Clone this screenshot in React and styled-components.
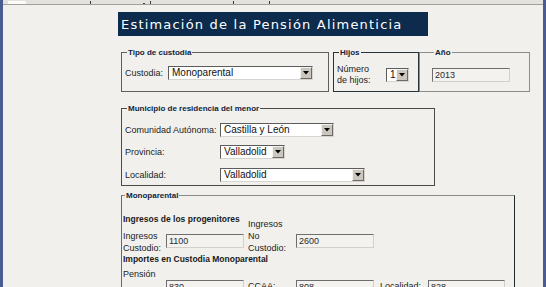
import React from 'react';
import styled, { createGlobalStyle } from 'styled-components';

const GlobalStyle = createGlobalStyle`
  html, body {
    margin: 0;
    padding: 0;
    background: #f1f0ec;
  }
  body {
    font-family: "Liberation Sans", Arial, sans-serif;
    color: #1a1a1a;
  }
`;

const Window = styled.div`
  width: 546px;
  height: 287px;
  box-sizing: border-box;
  overflow: hidden;
  border-left: 3px solid #4a5b93;
  border-right: 3px solid #4a5b93;
  background: #f1f0ec;
  display: flex;
  flex-direction: column;
`;

const TopStrip = styled.div`
  height: 4px;
  flex-shrink: 0;
  background: #e4e2dc;
  border-bottom: 1px solid #a3a19b;
  display: flex;
  align-items: flex-end;
`;

const StripMark = styled.span`
  display: block;
  width: ${p => p.$w}px;
  height: ${p => p.$h || 3}px;
  margin-left: ${p => p.$ml}px;
  background: ${p => p.$bg || '#3a3a3a'};
`;

const Content = styled.div`
  padding-left: 115px;
  display: flex;
  flex-direction: column;
`;

const TitleBar = styled.div`
  margin-top: 7px;
  width: 307px;
  height: 24px;
  padding-left: 3px;
  background: #0c2b4d;
  color: #ffffff;
  font-family: "DejaVu Sans", sans-serif;
  font-size: 13px;
  letter-spacing: 1.2px;
  line-height: 25px;
  white-space: nowrap;
`;

const Row = styled.div`
  display: flex;
  align-items: flex-start;
  margin-top: ${p => p.$mt || 0}px;
  margin-left: ${p => (p.$flush ? 0 : 3)}px;
  gap: ${p => p.$gap || 0}px;
`;

const Fieldset = styled.fieldset`
  margin: 0;
  min-width: 0;
  box-sizing: border-box;
  width: ${p => p.$w}px;
  height: ${p => p.$h}px;
  padding: ${p => p.$pad || '0 0 0 3px'};
  border: 1px solid ${p => p.$color || '#555'};
  ${p => p.$colors && `border-color: ${p.$colors};`}
`;

const Legend = styled.legend`
  margin-left: 2px;
  padding: 0 1px;
  font-family: "Liberation Sans", Arial, sans-serif;
  font-weight: bold;
  font-size: 8px;
  line-height: 9px;
  color: #0f2440;
`;

const FieldRow = styled.div`
  display: flex;
  align-items: center;
  height: ${p => p.$h || 14}px;
  margin-top: ${p => p.$mt || 0}px;
`;

const Label = styled.span`
  display: block;
  width: ${p => p.$w}px;
  flex-shrink: 0;
  margin-top: ${p => p.$mt || 0}px;
  font-size: 9px;
  line-height: ${p => p.$lh || 11}px;
  color: #1c1c1c;
  white-space: nowrap;
`;

const SelectBox = styled.div`
  box-sizing: border-box;
  width: ${p => p.$w}px;
  height: 14px;
  display: flex;
  align-items: center;
  background: #ffffff;
  border: 1px solid;
  border-color: #5c5c5c #d6d4cf #d6d4cf #5c5c5c;
`;

const SelectText = styled.span`
  flex: 1;
  padding-left: 3px;
  font-size: 10px;
  line-height: 12px;
  color: #111;
  white-space: nowrap;
  overflow: hidden;
`;

const ArrowButton = styled.span`
  box-sizing: border-box;
  width: 12px;
  height: 12px;
  display: flex;
  align-items: center;
  justify-content: center;
  background: #cbc7bf;
  border: 1px solid;
  border-color: #f4f3ef #6d6a64 #6d6a64 #f4f3ef;
`;

const TextBox = styled.div`
  box-sizing: border-box;
  width: ${p => p.$w}px;
  height: 14px;
  margin-top: ${p => p.$mt || 0}px;
  padding-left: 2px;
  background: #f3f2ef;
  border: 1px solid;
  border-color: #6e6e6e #d2d0cb #d2d0cb #6e6e6e;
  font-size: 9px;
  line-height: 12px;
  color: #2a2a2a;
`;

const Heading = styled.div`
  font-weight: bold;
  font-size: 8.5px;
  line-height: 12px;
  color: #1a1a1a;
  margin-top: ${p => p.$mt || 0}px;
`;

const Stack = styled.div`
  display: flex;
  flex-direction: column;
  margin-top: ${p => p.$mt || 0}px;
`;

const Grid = styled.div`
  display: grid;
  grid-template-columns: 43px 78px 4px 48px 78px 6px 48px 78px;
  align-items: start;
  margin-top: ${p => p.$mt || 0}px;
`;

const Spacer = styled.span`
  display: block;
`;

function Arrow() {
  return (
    <svg width="6" height="4" viewBox="0 0 6 4">
      <path d="M0 0h6L3 3.5z" fill="#000" />
    </svg>
  );
}

function Select({ width, value }) {
  return (
    <SelectBox $w={width}>
      <SelectText>{value}</SelectText>
      <ArrowButton>
        <Arrow />
      </ArrowButton>
    </SelectBox>
  );
}

export default function App() {
  return (
    <>
      <GlobalStyle />
      <Window>
        <TopStrip>
          <StripMark $w={18} $h={3} $ml={5} $bg="#fbfbfa" />
          <StripMark $w={1} $ml={64} />
          <StripMark $w={2} $h={1} $ml={52} />
          <StripMark $w={1} $ml={5} />
          <StripMark $w={1} $ml={82} />
          <StripMark $w={1} $ml={35} />
        </TopStrip>
        <Content>
          <TitleBar>Estimación de la Pensión Alimenticia</TitleBar>

          <Row $mt={12} $gap={4}>
            <Fieldset $w={208} $h={44} $color="#5e5e5e">
              <Legend>Tipo de custodia</Legend>
              <FieldRow $mt={9}>
                <Label $w={43}>Custodia:</Label>
                <Select width={145} value="Monoparental" />
              </FieldRow>
            </Fieldset>
            <Row $flush>
              <Fieldset $w={86} $h={44} $color="#27323b">
                <Legend>Hijos</Legend>
                <FieldRow $h={24} $mt={6}>
                  <Label $w={49}>Número<br />de hijos:</Label>
                  <Select width={23} value="1" />
                </FieldRow>
              </Fieldset>
              <Fieldset $w={111} $h={44} $color="#8c8c8c" $pad="0 0 0 12px">
                <Legend>Año</Legend>
                <TextBox $w={78} $mt={11}>2013</TextBox>
              </Fieldset>
            </Row>
          </Row>

          <Row $mt={12}>
            <Fieldset $w={314} $h={82} $color="#4a4a4a">
              <Legend>Municipio de residencia del menor</Legend>
              <FieldRow $mt={10}>
                <Label $w={95}>Comunidad Autónoma:</Label>
                <Select width={114} value="Castilla y León" />
              </FieldRow>
              <FieldRow $mt={8}>
                <Label $w={95}>Provincia:</Label>
                <Select width={65} value="Valladolid" />
              </FieldRow>
              <FieldRow $mt={9}>
                <Label $w={95}>Localidad:</Label>
                <Select width={145} value="Valladolid" />
              </FieldRow>
            </Fieldset>
          </Row>

          <Row $mt={5}>
            <Fieldset $w={394} $h={120} $colors="#8a8a8a #1e2c2c #1e2c2c #6a6a6a" $pad="0 0 0 1px">
              <Legend>Monoparental</Legend>
              <Heading $mt={13}>Ingresos de los progenitores</Heading>
              <Grid $mt={-7}>
                <Stack $mt={12}>
                  <Label $lh={12}>Ingresos</Label>
                  <Label $lh={12}>Custodio:</Label>
                </Stack>
                <TextBox $w={78} $mt={16}>1100</TextBox>
                <Spacer />
                <Stack>
                  <Label $lh={12}>Ingresos</Label>
                  <Label $lh={12}>No</Label>
                  <Label $lh={12}>Custodio:</Label>
                </Stack>
                <TextBox $w={78} $mt={16}>2600</TextBox>
              </Grid>
              <Heading $mt={-1}>Importes en Custodia Monoparental</Heading>
              <Grid $mt={3}>
                <Label $lh={12}>Pensión</Label>
                <TextBox $w={78} $mt={12}>830</TextBox>
                <Spacer />
                <Label $lh={12} $mt={12}>CCAA:</Label>
                <TextBox $w={78} $mt={12}>808</TextBox>
                <Spacer />
                <Label $lh={12} $mt={12}>Localidad:</Label>
                <TextBox $w={77} $mt={12}>828</TextBox>
              </Grid>
            </Fieldset>
          </Row>
        </Content>
      </Window>
    </>
  );
}
